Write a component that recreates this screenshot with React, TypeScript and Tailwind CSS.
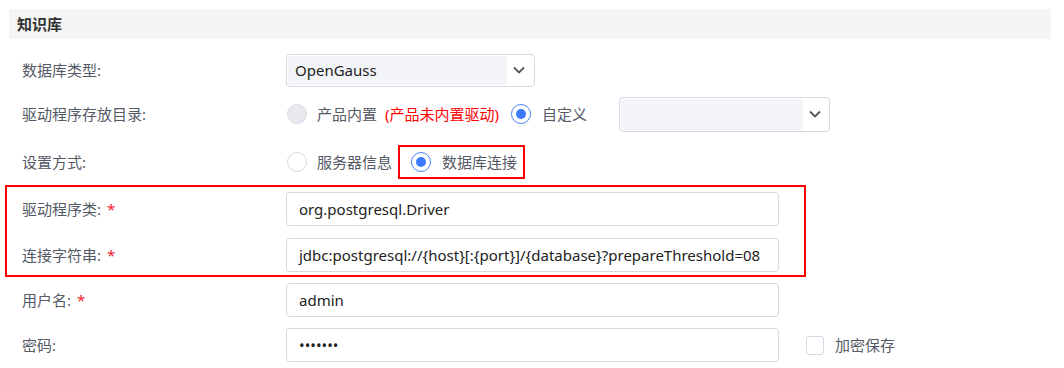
import React from 'react';

const font = 'font-["Noto_Sans","Noto_Sans_CJK_SC",sans-serif]';

function Chevron() {
  return (
    <svg width="14" height="14" viewBox="0 0 14 14" className="shrink-0">
      <polyline points="2,4.5 7,9.5 12,4.5" fill="none" stroke="#555" strokeWidth="1.8" />
    </svg>
  );
}

function Radio({ checked, disabled }: { checked?: boolean; disabled?: boolean }) {
  if (checked) {
    return (
      <span className="w-[20px] h-[20px] rounded-full border-[1.5px] border-[#4a82f7] bg-white flex items-center justify-center shrink-0">
        <span className="w-[10px] h-[10px] rounded-full bg-[#3b7bfb]" />
      </span>
    );
  }
  return (
    <span
      className={
        disabled
          ? 'block w-[20px] h-[20px] rounded-full border border-[#d9dbe4] bg-[#e8e9ef] shrink-0'
          : 'block w-[20px] h-[20px] rounded-full border border-[#d6d9e3] bg-white shrink-0'
      }
    />
  );
}

function Label({ text, required, wide }: { text: string; required?: boolean; wide?: boolean }) {
  return (
    <div className={(wide ? 'w-[279px] pl-[15px]' : 'w-[286px] pl-[22px]') + ' shrink-0 text-[15px] text-[#555a66] flex items-center'}>
      <span>{text}</span>
      {required && <span className="text-[#f5222d] ml-[6px]">*</span>}
    </div>
  );
}

function TextInput({ value }: { value: string }) {
  return (
    <div className="w-[493px] h-[34px] border border-[#d5d8e2] rounded-[4px] pl-[12px] flex items-center text-[15px] text-[#222] bg-white whitespace-nowrap overflow-hidden">
      {value}
    </div>
  );
}

export default function App() {
  return (
    <div className={`w-[1064px] h-[368px] bg-white overflow-hidden ${font}`}>
      <div className="ml-[9px] mt-[9px] w-[1042px] h-[30px] bg-[#f5f5f5] pl-[8px] flex items-center text-[15px] font-bold text-[#333]">
        知识库
      </div>

      <div className="mt-[9px] h-[44px] flex items-center">
        <Label text="数据库类型:" />
        <div className="w-[249px] h-[33px] border border-[#d5d8e2] rounded-[4px] flex items-center p-[1px] pr-[8px]">
          <div className="flex-1 h-full bg-[#f3f4f8] rounded-[3px] pl-[7px] flex items-center text-[15px] text-[#222]">
            OpenGauss
          </div>
          <div className="ml-[5px]">
            <Chevron />
          </div>
        </div>
      </div>

      <div className="h-[44px] flex items-center text-[15px]">
        <Label text="驱动程序存放目录:" />
        <div className="flex items-center">
          <span className="ml-[1px]"><Radio disabled /></span>
          <span className="ml-[10px] text-[#555a66]">产品内置</span>
          <span className="ml-[8px] text-[#ff0000]">(产品未内置驱动)</span>
          <span className="ml-[12px]"><Radio checked /></span>
          <span className="ml-[11px] text-[#555a66]">自定义</span>
          <div className="ml-[32px] w-[211px] h-[35px] border border-[#d5d8e2] rounded-[4px] flex items-center p-[1px] pr-[7px]">
            <div className="flex-1 h-full bg-[#f3f4f8] rounded-[3px]" />
            <div className="ml-[5px]">
              <Chevron />
            </div>
          </div>
        </div>
      </div>

      <div className="h-[49px] pt-[3px] flex items-center text-[15px]">
        <Label text="设置方式:" />
        <div className="flex items-center">
          <span className="ml-[1px]"><Radio /></span>
          <span className="ml-[10px] text-[#555a66]">服务器信息</span>
          <div className="ml-[6px] h-[34px] border-2 border-[#ff0000] pl-[11px] pr-[6px] flex items-center">
            <Radio checked />
            <span className="ml-[11px] text-[#555a66]">数据库连接</span>
          </div>
        </div>
      </div>

      <div className="ml-[5px] w-[801px] border-2 border-[#ff0000] pt-[5px] pb-[3px] flex flex-col gap-[12px]">
        <div className="h-[34px] flex items-center">
          <Label text="驱动程序类:" required wide />
          <TextInput value="org.postgresql.Driver" />
        </div>
        <div className="h-[34px] flex items-center">
          <Label text="连接字符串:" required wide />
          <TextInput value="jdbc:postgresql://{host}[:{port}]/{database}?prepareThreshold=08" />
        </div>
      </div>

      <div className="mt-[6px] h-[34px] flex items-center">
        <Label text="用户名:" required />
        <TextInput value="admin" />
      </div>

      <div className="mt-[11px] h-[34px] flex items-center">
        <Label text="密码:" />
        <TextInput value="•••••••" />
        <span className="ml-[27px] w-[18px] h-[19px] border border-[#d6d9e3] rounded-[3px] bg-white shrink-0" />
        <span className="ml-[11px] text-[15px] text-[#555a66]">加密保存</span>
      </div>
    </div>
  );
}
